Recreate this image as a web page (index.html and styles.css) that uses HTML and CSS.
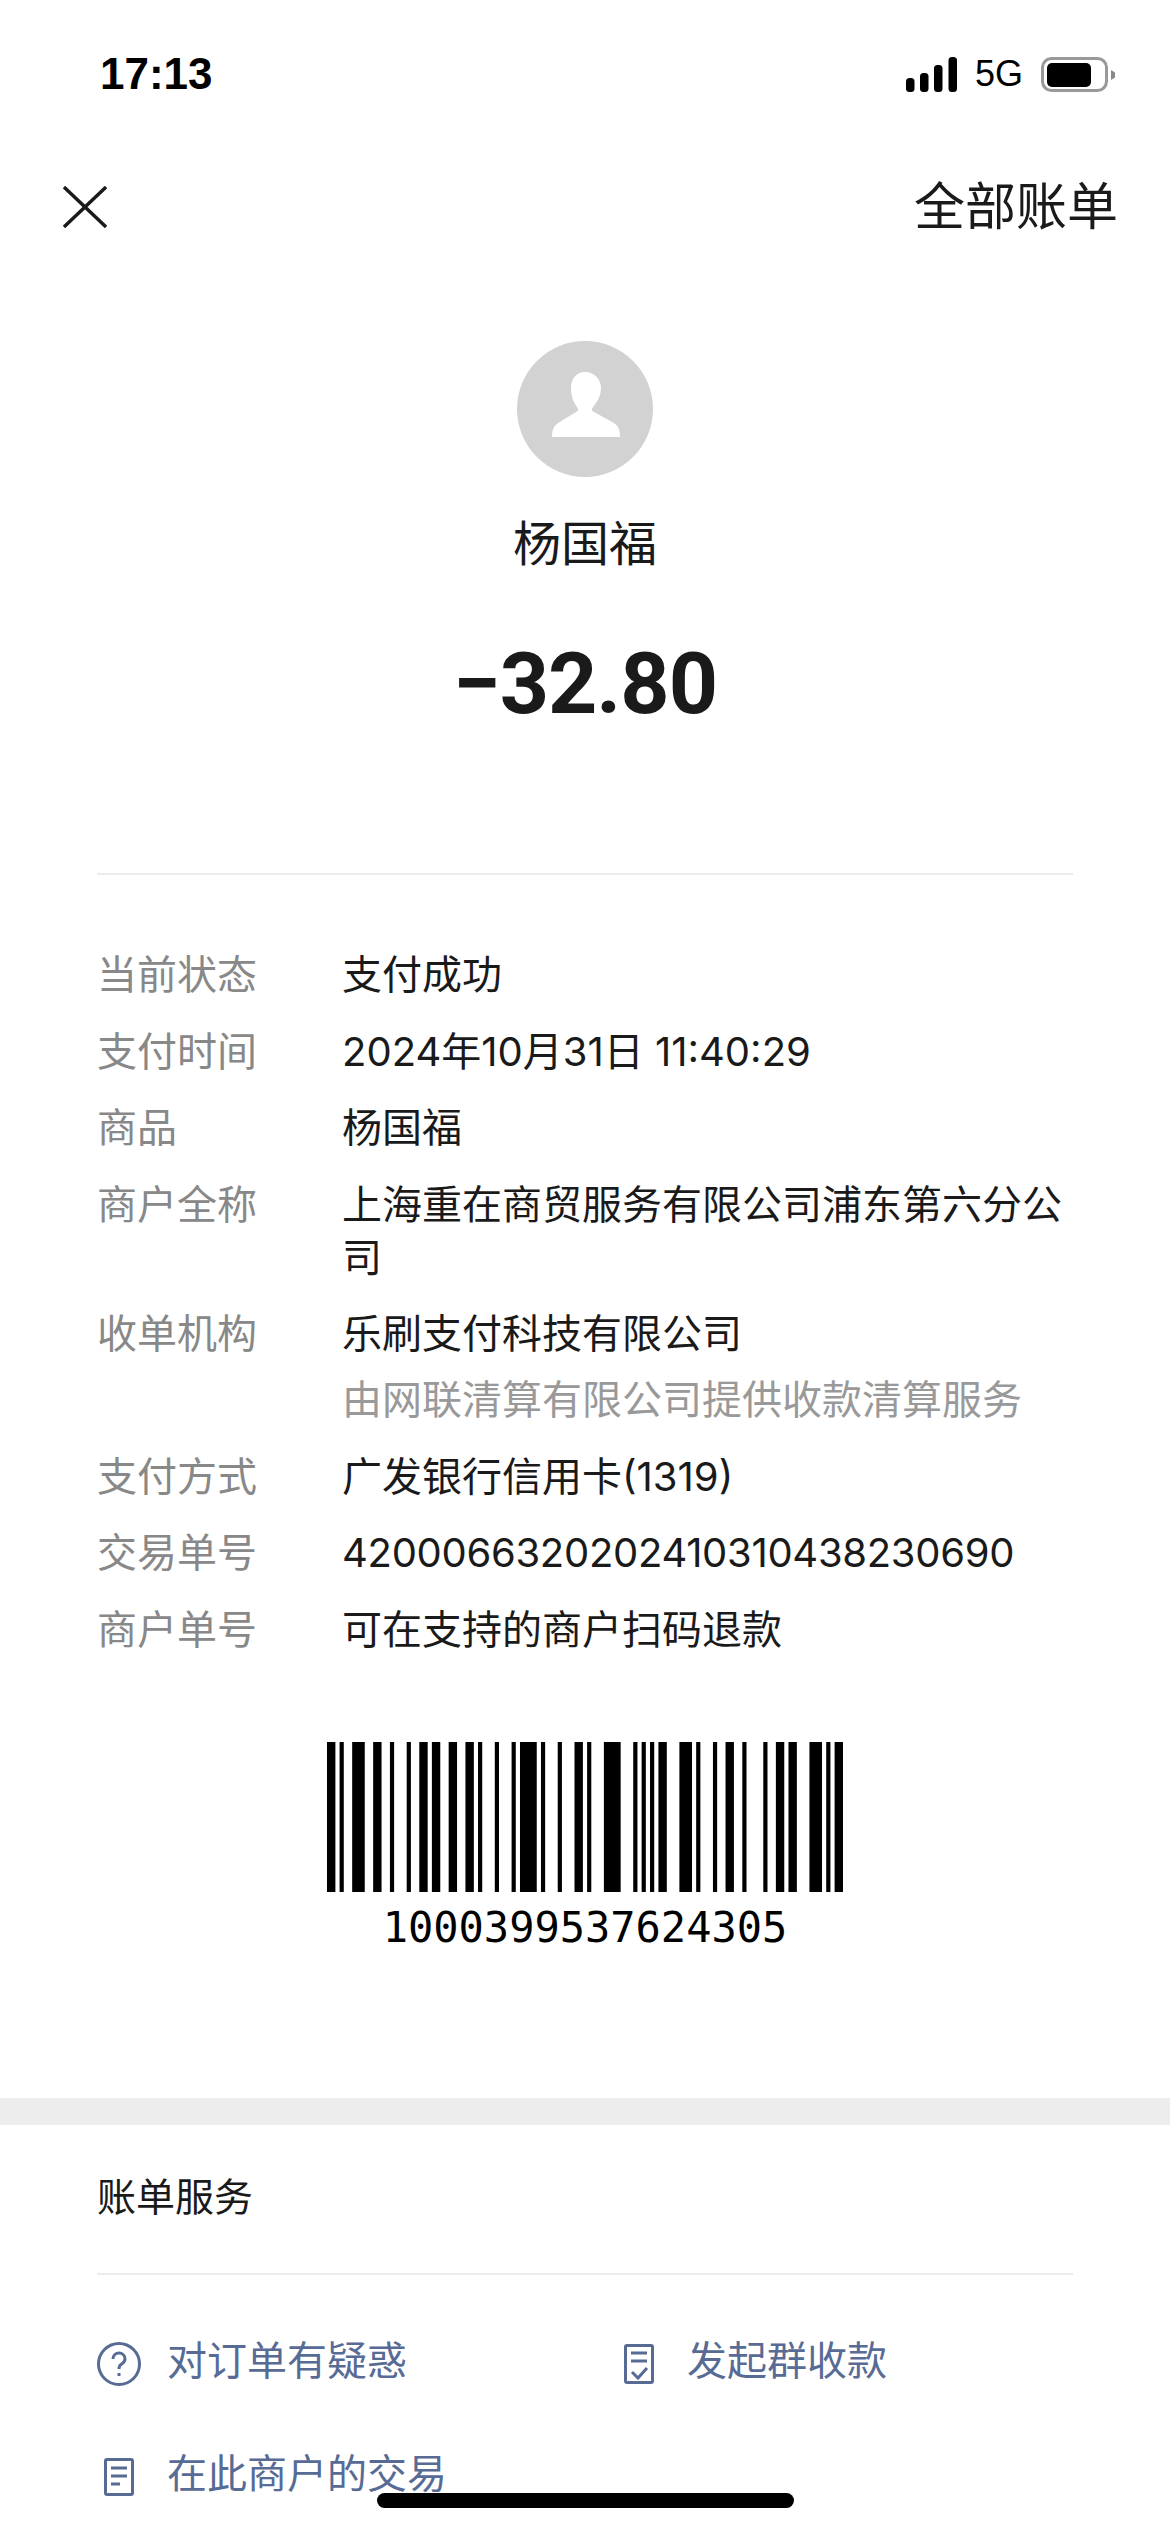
FILE: index.html
```html
<!DOCTYPE html>
<html lang="zh-CN">

<head>
    <meta charset="UTF-8">
    <meta name="viewport" content="width=device-width, initial-scale=1.0">
    <title>账单详情</title>
    <link rel="stylesheet" href="styles.css">
</head>

<body>
<div class="page">
    <div class="status">
        <span class="time">17:13</span>
        <div class="status-right">
            <svg class="signal" width="51" height="35" viewBox="0 0 51 35">
                <rect x="0" y="21" width="8.5" height="14" rx="3.5"/>
                <rect x="14" y="16" width="8.5" height="19" rx="3.5"/>
                <rect x="28" y="8" width="8.5" height="27" rx="3.5"/>
                <rect x="42.5" y="0" width="8.5" height="35" rx="3.5"/>
            </svg>
            <span class="net">5G</span>
            <svg class="battery" width="74" height="35" viewBox="0 0 74 35">
                <rect x="1.5" y="1.5" width="64" height="32" rx="9" fill="none" stroke="#999" stroke-width="3"/>
                <rect x="6" y="6" width="44" height="24" rx="5"/>
                <path d="M70 13l4 2.5v5l-4 2.5z" fill="#888"/>
            </svg>
        </div>
    </div>

    <div class="nav">
        <svg class="close" width="44" height="42" viewBox="0 0 44 42">
            <path d="M1 1L43 41M43 1L1 41" fill="none" stroke="#1a1a1a" stroke-width="3.4"/>
        </svg>
        <span class="nav-link">全部账单</span>
    </div>

    <div class="summary">
        <svg class="avatar" width="136" height="136" viewBox="0 0 136 136">
            <circle cx="68" cy="68" r="68" fill="#d2d2d2"/>
            <path fill="#fff" d="M68 31C59 31 54 38 54 47C54 56 57 62 60 66C62 69 61 70 59 71L41 82C37 85 35 88 35 96L103 96C103 88 101 85 97 82L77 71C75 70 74 69 76 66C79 62 84 56 84 47C84 38 77 31 68 31Z"/>
        </svg>
        <div class="name">杨国福</div>
        <div class="amount">−32.80</div>
    </div>

    <div class="details">
        <div class="row"><div class="label">当前状态</div><div class="value">支付成功</div></div>
        <div class="row"><div class="label">支付时间</div><div class="value">2024年10月31日 11:40:29</div></div>
        <div class="row"><div class="label">商品</div><div class="value">杨国福</div></div>
        <div class="row"><div class="label">商户全称</div><div class="value">上海重在商贸服务有限公司浦东第六分公司</div></div>
        <div class="row">
            <div class="label">收单机构</div>
            <div class="value">
                乐刷支付科技有限公司
                <div class="value-sub">由网联清算有限公司提供收款清算服务</div>
            </div>
        </div>
        <div class="row"><div class="label">支付方式</div><div class="value">广发银行信用卡(1319)</div></div>
        <div class="row"><div class="label">交易单号</div><div class="value value-num">4200066320202410310438230690</div></div>
        <div class="row"><div class="label">商户单号</div><div class="value">可在支持的商户扫码退款</div></div>
    </div>

    <div class="barcode">
        <svg width="516" height="150" viewBox="0 0 123 1" preserveAspectRatio="none">
            <rect x="0" width="2" height="1"/><rect x="3" width="1" height="1"/><rect x="6" width="3" height="1"/>
            <rect x="11" width="2" height="1"/><rect x="15" width="1" height="1"/><rect x="19" width="1" height="1"/>
            <rect x="22" width="2" height="1"/><rect x="25" width="2" height="1"/><rect x="29" width="2" height="1"/>
            <rect x="33" width="2" height="1"/><rect x="36" width="1" height="1"/><rect x="40" width="1" height="1"/>
            <rect x="44" width="1" height="1"/><rect x="46" width="4" height="1"/><rect x="51" width="1" height="1"/>
            <rect x="55" width="1" height="1"/><rect x="59" width="2" height="1"/><rect x="62" width="1" height="1"/>
            <rect x="66" width="4" height="1"/><rect x="73" width="1" height="1"/><rect x="75" width="1" height="1"/>
            <rect x="77" width="1" height="1"/><rect x="79" width="2" height="1"/><rect x="84" width="3" height="1"/>
            <rect x="88" width="1" height="1"/><rect x="92" width="1" height="1"/><rect x="95" width="2" height="1"/>
            <rect x="99" width="1" height="1"/><rect x="104" width="1" height="1"/><rect x="107" width="2" height="1"/>
            <rect x="110" width="2" height="1"/><rect x="115" width="3" height="1"/><rect x="119" width="1" height="1"/>
            <rect x="121" width="2" height="1"/>
        </svg>
        <div class="barcode-num">1000399537624305</div>
    </div>

    <div class="band"></div>

    <div class="service">
        <div class="service-title">账单服务</div>
        <div class="links">
            <div class="link">
                <svg class="link-icon" width="44" height="44" viewBox="0 0 44 44">
                    <circle cx="22" cy="22" r="20.5"/>
                    <path d="M16 17c0-4 3-6 6-6s6 2 6 6c0 3-2 4-4 5.500-1.500 1-2 2-2 4.500"/>
                    <path d="M22 31v3"/>
                </svg>
                对订单有疑惑
            </div>
            <div class="link">
                <svg class="link-icon" width="44" height="40" viewBox="0 0 44 40">
                    <rect x="8.500" y="1.500" width="27" height="37" rx="1.500"/>
                    <path d="M14 9h16M14 17h16M15 28l6 6 9-10"/>
                </svg>
                发起群收款
            </div>
            <div class="link">
                <svg class="link-icon" width="44" height="38" viewBox="0 0 44 38">
                    <rect x="8.500" y="1.500" width="27" height="35" rx="1.500"/>
                    <path d="M14 10h16M14 18h16M14 26h9"/>
                </svg>
                在此商户的交易
            </div>
        </div>
    </div>

    <div class="home-bar"></div>
</div>
</body>

</html>
```

FILE: styles.css
```css
* {
    margin: 0;
    padding: 0;
    box-sizing: border-box;
}

body {
    background: #fff;
    font-family: Inter, "Noto Sans CJK SC", sans-serif;
    color: #1a1a1a;
}

.page {
    position: relative;
    width: 1170px;
    height: 2532px;
    overflow: hidden;
}

.status {
    display: flex;
    justify-content: space-between;
    align-items: center;
    height: 148px;
    padding: 0 55px 0 100px;
    color: #000;
}

.time {
    font-family: "Liberation Sans", sans-serif;
    font-size: 44px;
    font-weight: 700;
}

.status-right {
    display: flex;
    align-items: center;
}

.net {
    margin: 0 18px;
    font-family: "Liberation Sans", sans-serif;
    font-size: 36px;
}

.nav {
    display: flex;
    justify-content: space-between;
    align-items: center;
    height: 118px;
    padding: 0 52px 0 63px;
}

.nav-link {
    font-size: 51px;
    line-height: 60px;
}

.summary {
    display: flex;
    flex-direction: column;
    align-items: center;
    padding-top: 75px;
    padding-bottom: 139px;
    margin: 0 97px;
    border-bottom: 2px solid #ececec;
}

.name {
    margin-top: 37px;
    font-size: 48px;
    line-height: 60px;
}

.amount {
    margin-top: 60px;
    font-family: Roboto, sans-serif;
    font-size: 86px;
    font-weight: 700;
    line-height: 100px;
    letter-spacing: -1px;
}

.details {
    display: flex;
    flex-direction: column;
    gap: 23.5px;
    padding: 73px 97px 0;
    font-size: 40px;
    line-height: 53px;
}

.row {
    display: flex;
}

.label {
    flex-shrink: 0;
    width: 245px;
    color: #888;
}

.value {
    flex: 1;
}

.value-num {
    letter-spacing: -0.3px;
}

.value-sub {
    margin-top: 13px;
    color: #999;
}

.barcode {
    display: flex;
    flex-direction: column;
    align-items: center;
    margin-top: 86px;
}

.barcode svg {
    display: block;
}

.barcode-num {
    margin-top: 14px;
    font-family: "DejaVu Sans Mono", monospace;
    font-size: 42px;
    line-height: 44px;
    color: #000;
}

.band {
    height: 27px;
    margin-top: 148px;
    background: #ededed;
}

.service {
    padding: 0 97px;
}

.service-title {
    padding: 45px 0 50px;
    font-size: 39px;
    line-height: 53px;
    border-bottom: 2px solid #ececec;
}

.links {
    display: grid;
    grid-template-columns: 520px 1fr;
    row-gap: 60px;
    padding-top: 59px;
}

.link {
    display: flex;
    align-items: center;
    gap: 26px;
    font-size: 40px;
    line-height: 53px;
    color: #576b95;
}

.link-icon {
    flex-shrink: 0;
    margin-top: 8px;
    fill: none;
    stroke: #576b95;
    stroke-width: 3;
}

.home-bar {
    position: absolute;
    left: 377px;
    bottom: 24px;
    width: 417px;
    height: 15px;
    border-radius: 8px;
    background: #000;
}
```
